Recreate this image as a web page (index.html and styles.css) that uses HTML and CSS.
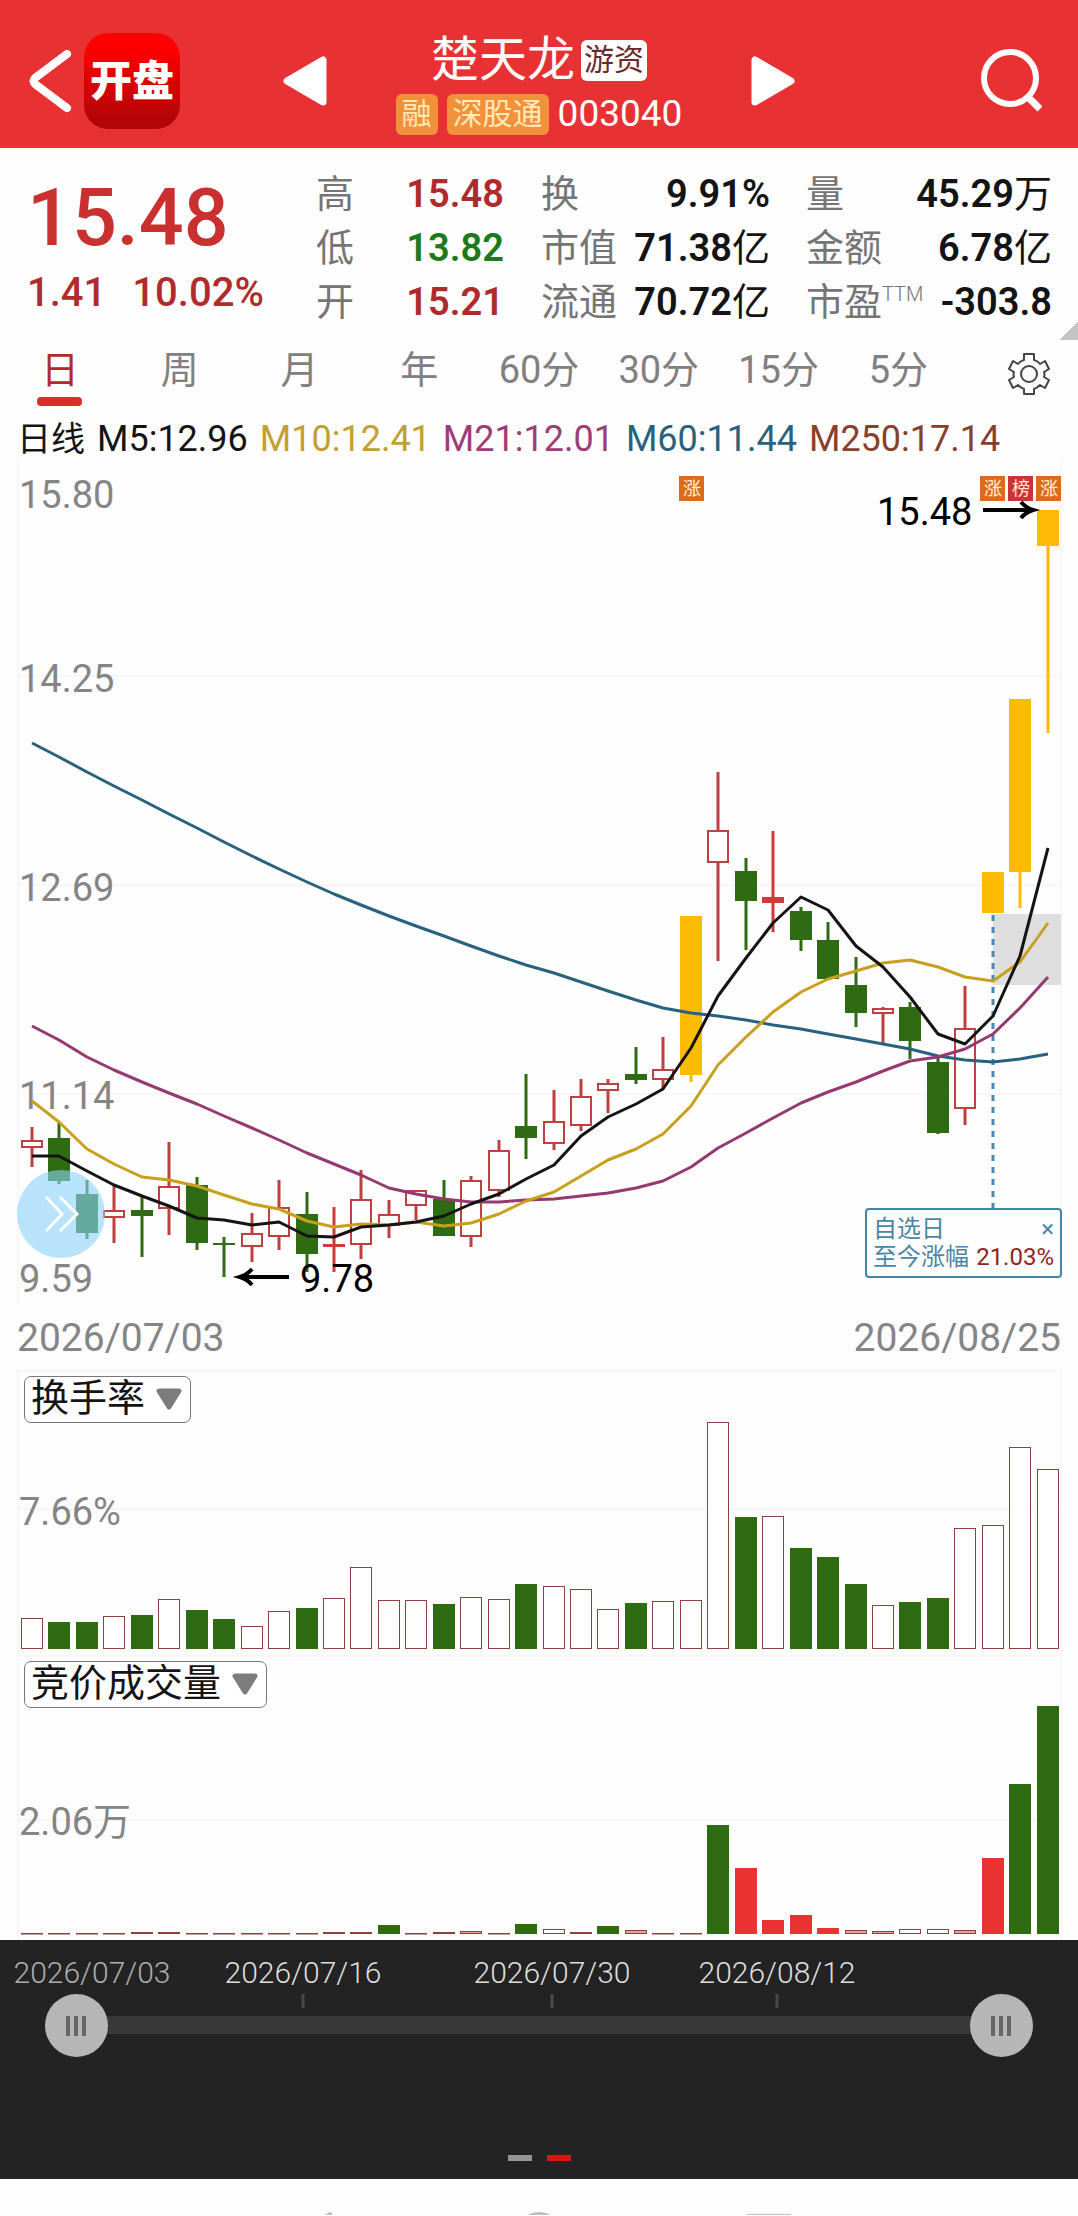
FILE: index.html
```html
<!DOCTYPE html>
<html lang="zh-CN">
<head>
<meta charset="utf-8">
<title>楚天龙 003040</title>
<meta content="width=device-width, initial-scale=1" name="viewport" />
<link rel="stylesheet" href="styles.css">
</head>

<body>
<header class="header">
  <div class="hdr-left">
    <button class="icon-btn" aria-label="返回">
      <svg width="44" height="64" viewBox="0 0 44 64"><path d="M39 5 L7 29 Q4 32 7 35 L39 59" fill="none" stroke="#fff" stroke-width="8" stroke-linecap="round" stroke-linejoin="round"/></svg>
    </button>
    <div class="logo">开盘</div>
  </div>
  <div class="hdr-mid">
    <button class="icon-btn" aria-label="上一只">
      <svg width="44" height="50" viewBox="0 0 44 50"><path d="M4 25 L40 4 V46 Z" fill="#fff" stroke="#fff" stroke-width="7" stroke-linejoin="round"/></svg>
    </button>
    <div class="stock">
      <div class="stock-row">
        <h1 class="name">楚天龙</h1>
        <span class="tag tag-white">游资</span>
      </div>
      <div class="stock-row stock-sub">
        <span class="tag">融</span>
        <span class="tag">深股通</span>
        <span class="code">003040</span>
      </div>
    </div>
    <button class="icon-btn" aria-label="下一只">
      <svg width="44" height="50" viewBox="0 0 44 50"><path d="M40 25 L4 4 V46 Z" fill="#fff" stroke="#fff" stroke-width="7" stroke-linejoin="round"/></svg>
    </button>
  </div>
  <div class="hdr-right">
    <button class="icon-btn" aria-label="搜索">
      <svg width="64" height="64" viewBox="0 0 64 64" fill="none" stroke="#fff" stroke-width="6"><circle cx="32" cy="29" r="26"/><path d="M50 48 L62 60" stroke-width="7"/></svg>
    </button>
  </div>
</header>

<section class="quote">
  <div class="price-box">
    <div class="price">15.48</div>
    <div class="change"><span>1.41</span><span>10.02%</span></div>
  </div>
  <dl class="stats stats-a">
    <div><dt>高</dt><dd class="up">15.48</dd></div>
    <div><dt>低</dt><dd class="down">13.82</dd></div>
    <div><dt>开</dt><dd class="up">15.21</dd></div>
  </dl>
  <dl class="stats stats-b">
    <div><dt>换</dt><dd>9.91%</dd></div>
    <div><dt>市值</dt><dd>71.38<i>亿</i></dd></div>
    <div><dt>流通</dt><dd>70.72<i>亿</i></dd></div>
  </dl>
  <dl class="stats stats-c">
    <div><dt>量</dt><dd>45.29<i>万</i></dd></div>
    <div><dt>金额</dt><dd>6.78<i>亿</i></dd></div>
    <div><dt>市盈<small>TTM</small></dt><dd>-303.8</dd></div>
  </dl>
  <span class="corner"></span>
</section>

<nav class="tabs">
  <button class="tab active">日</button>
  <button class="tab">周</button>
  <button class="tab">月</button>
  <button class="tab">年</button>
  <button class="tab">60分</button>
  <button class="tab">30分</button>
  <button class="tab">15分</button>
  <button class="tab">5分</button>
  <button class="tab tab-set" aria-label="设置">
    <svg width="44" height="44" viewBox="0 0 44 44" fill="none" stroke="#444" stroke-width="2" stroke-linejoin="round">
      <path d="M17 2 H27 V8 Q31 9 33 12 L38 9 L42 17 L37 20 Q38 22 37 25 L42 28 L38 36 L33 33 Q30 36 27 37 V42 H17 V37 Q14 36 11 33 L6 36 L2 28 L7 25 Q6 22 7 20 L2 17 L6 9 L11 12 Q13 9 17 8 Z"/>
      <circle cx="22" cy="22" r="8"/>
    </svg>
  </button>
</nav>

<div class="legend">
  <span class="legend-name">日线</span>
  <span>M5:12.96</span>
  <span class="m10">M10:12.41</span>
  <span class="m21">M21:12.01</span>
  <span class="m60">M60:11.44</span>
  <span class="m250">M250:17.14</span>
</div>

<div class="chart">
  <svg id="kline" viewBox="0 0 1078 850">
    <path class="frame" d="M18 0 V845 M1061 0 V820 M18 216 H1061 M18 425 H1061 M18 634 H1061"/>
    <rect x="993" y="454" width="68" height="71" fill="#dedede"/>
    <g id="candles"></g>
    <g class="axis">
      <text x="19" y="48">15.80</text>
      <text x="19" y="232">14.25</text>
      <text x="19" y="441">12.69</text>
      <text x="19" y="649">11.14</text>
      <text x="19" y="832">9.59</text>
    </g>
    <path class="dash" d="M993 455 V748"/>
    <g id="lines"></g>
    <g class="mark">
      <rect x="679" y="16" width="25" height="25"/><text x="692" y="35">涨</text>
      <rect x="980" y="16" width="25" height="25"/><text x="993" y="35">涨</text>
      <rect x="1008" y="16" width="25" height="25" class="mark-red"/><text x="1021" y="35">榜</text>
      <rect x="1036" y="16" width="25" height="25"/><text x="1049" y="35">涨</text>
    </g>
    <g class="peak">
      <text x="877" y="65">15.48</text>
      <path d="M983 50 H1030 M1021 42 Q1026 48 1033 50 Q1026 52 1021 58"/>
      <text x="300" y="832">9.78</text>
      <path d="M289 817 H243 M252 809 Q247 815 240 817 Q247 819 252 825"/>
    </g>
  </svg>
  <button class="expand" aria-label="展开">
    <svg width="40" height="40" viewBox="0 0 40 40" fill="none" stroke="#fff" stroke-width="3"><path d="M5 3 L21 20 L5 37 M19 3 L36 20 L19 37"/></svg>
  </button>
  <div class="tip">
    <div class="tip-row"><span>自选日</span><button class="tip-close" aria-label="关闭">×</button></div>
    <div class="tip-row"><span>至今涨幅</span><b>21.03%</b></div>
  </div>
</div>

<div class="dates">
  <span>2026/07/03</span>
  <span>2026/08/25</span>
</div>

<div class="chart">
  <svg viewBox="0 0 1078 285">
    <path class="frame" d="M18 1 H1061 M18 0 V285 M1061 0 V285 M18 139 H1061"/>
    <g class="axis"><text x="19" y="155">7.66%</text></g>
    <g id="turnover"></g>
  </svg>
  <div class="pick">
    <select aria-label="指标一"><option>换手率</option></select>
    <svg width="26" height="22" viewBox="0 0 26 22"><path d="M3 3 H23 L13 19 Z" fill="#7c7c7c" stroke="#7c7c7c" stroke-width="5" stroke-linejoin="round"/></svg>
  </div>
</div>

<div class="chart">
  <svg viewBox="0 0 1078 285">
    <path class="frame" d="M18 1 H1061 M18 0 V285 M1061 0 V285 M18 165 H1061"/>
    <g class="axis"><text x="19" y="180">2.06万</text></g>
    <g id="auction"></g>
  </svg>
  <div class="pick">
    <select aria-label="指标二"><option>竞价成交量</option></select>
    <svg width="26" height="22" viewBox="0 0 26 22"><path d="M3 3 H23 L13 19 Z" fill="#7c7c7c" stroke="#7c7c7c" stroke-width="5" stroke-linejoin="round"/></svg>
  </div>
</div>

<section class="range">
  <svg class="range-axis" viewBox="0 0 1078 54">
    <g class="range-text">
      <text x="92" y="43" class="dim">2026/07/03</text>
      <text x="303" y="43">2026/07/16</text>
      <text x="552" y="43">2026/07/30</text>
      <text x="777" y="43">2026/08/12</text>
    </g>
  </svg>
  <svg class="range-axis" viewBox="0 0 1078 14"><path d="M303 0 V14 M552 0 V14 M777 0 V14" stroke="#484848" stroke-width="3"/></svg>
  <div class="slider">
    <div class="slider-track"></div>
    <input type="range" min="0" max="100" value="0" aria-label="开始日期">
    <input type="range" min="0" max="100" value="100" aria-label="结束日期">
  </div>
  <div class="pager"><span></span><span class="on"></span></div>
</section>

<nav class="sysbar">
  <svg viewBox="0 0 1078 36" fill="none" stroke="#bdbdbd" stroke-width="4">
    <path d="M330 35 L304 54 L330 73 Z" stroke-linejoin="round"/>
    <circle cx="539" cy="56" r="21"/>
    <rect x="749" y="37" width="40" height="40"/>
  </svg>
</nav>

<script src="script.js"></script>
</body>
</html>
```
FILE: styles.css
```css
* {
  box-sizing: border-box;
  margin: 0;
  padding: 0;
}
body {
  background: #fdfdfd;
  color: #141414;
  font-family: Roboto, "Noto Sans CJK SC", sans-serif;
  font-size: 38px;
}
button {
  border: none;
  background: none;
  font: inherit;
  color: inherit;
  cursor: pointer;
}
svg {
  display: block;
}

/* header */
.header {
  display: flex;
  align-items: center;
  height: 148px;
  padding: 14px 28px 0;
  background: #e83133;
  color: #fff;
}
.hdr-left, .hdr-right {
  display: flex;
  flex: 1;
  align-items: center;
}
.hdr-left {
  gap: 12px;
}
.hdr-right {
  justify-content: flex-end;
}
.hdr-right .icon-btn {
  padding-right: 8px;
}
.logo {
  width: 96px;
  height: 96px;
  border-radius: 24px;
  background: linear-gradient(#ff0000 15%, #b40508 90%);
  font-size: 42px;
  font-weight: 900;
  line-height: 98px;
  text-align: center;
}
.hdr-mid {
  display: flex;
  width: 512px;
  align-items: center;
  justify-content: space-between;
}
.stock {
  display: flex;
  flex-direction: column;
  align-items: center;
  gap: 4px;
  padding-top: 6px;
}
.stock-row {
  display: flex;
  align-items: center;
  gap: 6px;
}
.stock-sub {
  gap: 9px;
}
.name {
  font-size: 48px;
  font-weight: 400;
  line-height: 56px;
}
.tag {
  height: 41px;
  padding: 0 6px;
  border-radius: 6px;
  background: #f3903c;
  color: #ffeab8;
  font-size: 30px;
  line-height: 40px;
}
.tag-white {
  padding: 0 3px;
  background: #fff;
  color: #6b2a2a;
}
.code {
  font-size: 37px;
  line-height: 44px;
}

/* quote */
.quote {
  position: relative;
  display: flex;
  padding: 19px 26px 11px 27px;
}
.price-box {
  flex: 1;
  color: #c9302f;
  font-weight: 500;
}
.price {
  font-size: 79px;
  line-height: 102px;
}
.change {
  display: flex;
  gap: 26px;
  color: #b02c2c;
  font-size: 40px;
  line-height: 48px;
}
.stats > div {
  display: flex;
  justify-content: space-between;
  line-height: 54px;
}
.stats dt {
  color: #757575;
}
.stats dd {
  font-weight: 600;
}
.stats i {
  font-style: normal;
  font-weight: 400;
}
.stats small {
  font-size: 20px;
  font-weight: 300;
  vertical-align: 14px;
  line-height: 20px;
}
.stats-a {
  width: 188px;
  margin-right: 37px;
}
.stats-b {
  width: 229px;
  margin-right: 36px;
}
.stats-c {
  width: 246px;
}
.stats .up {
  color: #ad2b2c;
}
.stats .down {
  color: #1c7a1c;
}
.corner {
  position: absolute;
  right: 0;
  bottom: 0;
  width: 19px;
  height: 19px;
  background: linear-gradient(135deg, transparent 50%, #c4c4c4 50%);
}

/* period tabs */
.tabs {
  display: grid;
  grid-template-columns: repeat(9, 1fr);
}
.tab {
  display: flex;
  flex-direction: column;
  align-items: center;
  height: 70px;
  padding-top: 3px;
  color: #808080;
  line-height: 54px;
}
.tab.active {
  color: #b02a2a;
}
.tab.active::after {
  content: "";
  width: 45px;
  height: 9px;
  border-radius: 4px;
  background: #dc2d2d;
}
.tab-set {
  padding: 12px 0 0 22px;
}
.legend {
  display: flex;
  gap: 12px;
  padding: 3px 17px 0;
  font-size: 36px;
  line-height: 52px;
  white-space: nowrap;
}
.legend-name {
  font-size: 34px;
}
.m10 { color: #c2a032; }
.m21 { color: #9d3d77; }
.m60 { color: #28627f; }
.m250 { color: #8a3f2c; }

/* charts */
.chart {
  position: relative;
}
.legend + .chart {
  margin-top: -5px;
}
.chart > svg {
  width: 100%;
  height: auto;
}
.frame {
  fill: none;
  stroke: #f0f0f2;
  stroke-width: 1;
}
.axis text {
  fill: #858585;
}
.dash {
  stroke: #4a88b4;
  stroke-width: 3;
  stroke-dasharray: 6 6;
}
.ma {
  fill: none;
  stroke-width: 3;
  stroke-linejoin: round;
}
.mark rect {
  fill: #dc6b1e;
}
.mark .mark-red {
  fill: #cd3238;
}
.mark text {
  fill: #fff0d0;
  font-size: 18px;
  text-anchor: middle;
}
.peak text {
  fill: #000;
}
.peak path {
  fill: none;
  stroke: #000;
  stroke-width: 4;
}
.expand {
  position: absolute;
  left: 17px;
  bottom: 52px;
  display: flex;
  align-items: center;
  justify-content: center;
  width: 88px;
  height: 88px;
  border-radius: 50%;
  background: rgba(140, 210, 250, 0.6);
}
.tip {
  position: absolute;
  right: 16px;
  bottom: 32px;
  width: 197px;
  height: 70px;
  padding: 5px 6px;
  border: 2px solid #3d86a8;
  border-radius: 4px;
  background: #fdfdfd;
  color: #4a86a5;
  font-size: 24px;
  line-height: 28px;
  white-space: nowrap;
}
.tip-row {
  display: flex;
  justify-content: space-between;
}
.tip-row b {
  color: #8f2626;
  font-weight: 400;
}
.dates {
  display: flex;
  justify-content: space-between;
  padding: 0 17px 4px;
  color: #858585;
  font-size: 39px;
  line-height: 56px;
}
.pick {
  position: absolute;
  left: 24px;
  top: 6px;
}
.pick select {
  display: block;
  height: 47px;
  padding: 0 44px 4px 6px;
  border: 1px solid #777;
  border-radius: 7px;
  background: #fff;
  color: #141414;
  font: inherit;
  line-height: 42px;
  appearance: none;
}
.pick svg {
  position: absolute;
  right: 9px;
  top: 12px;
  pointer-events: none;
}
.bar-up {
  fill: #fff;
  stroke: #8c4040;
  stroke-width: 1;
}
.bar-pale {
  fill: #e8a09a;
  stroke: #8c4040;
  stroke-width: 1;
}
.bar-red { fill: #e93232; }
.bar-down { fill: #2f6b13; }

/* date range slider */
.range {
  height: 239px;
  background: #232323;
}
.range-axis {
  width: 100%;
  height: auto;
}
.range-text text {
  fill: #dedede;
  font-size: 30px;
  font-weight: 300;
  text-anchor: middle;
}
.range-text .dim {
  fill: #adadad;
}
.slider {
  display: grid;
  align-items: center;
  height: 64px;
  margin: -15px 45px 0;
}
.slider > * {
  grid-area: 1 / 1;
}
.slider-track {
  height: 18px;
  margin: 0 32px;
  background: #3a3939;
}
.slider input {
  width: 100%;
  height: 64px;
  background: none;
  appearance: none;
  pointer-events: none;
}
.slider input::-webkit-slider-thumb {
  width: 63px;
  height: 63px;
  border-radius: 50%;
  background:
    linear-gradient(#666, #666) 21px 22px / 4px 20px no-repeat,
    linear-gradient(#666, #666) 29px 22px / 4px 20px no-repeat,
    linear-gradient(#666, #666) 37px 22px / 4px 20px no-repeat,
    #b6b6b6;
  appearance: none;
  pointer-events: auto;
}
.pager {
  display: flex;
  justify-content: center;
  gap: 15px;
  padding-top: 98px;
}
.pager span {
  width: 24px;
  height: 6px;
  background: #959595;
}
.pager .on {
  background: #dd1512;
}
.sysbar {
  overflow: hidden;
}
.sysbar svg {
  width: 100%;
  height: auto;
}
```
FILE: script.js
```js
// one slot per trading day
const FIRST = 32;
const STEP = 27.45;
const BAR = 22;
const BASE = 279;

// type, high, body top, body bottom, low
const candles = [
  ['up', 667, 680, 688, 707], ['down', 663, 678, 721, 724], ['down', 720, 734, 773, 779],
  ['up', 725, 750, 758, 783], ['down', 736, 750, 756, 797], ['up', 682, 726, 749, 775],
  ['down', 717, 725, 783, 790], ['down', 777, 783, 785, 817], ['up', 753, 773, 787, 802],
  ['up', 720, 747, 777, 790], ['down', 732, 754, 794, 812], ['flat', 747, 784, 787, 812],
  ['up', 710, 739, 785, 799], ['up', 740, 754, 766, 778], ['up', 730, 730, 746, 760],
  ['down', 720, 739, 776, 776], ['up', 716, 720, 777, 787], ['up', 680, 690, 731, 737],
  ['down', 614, 666, 678, 699], ['up', 630, 661, 684, 690], ['up', 619, 636, 666, 671],
  ['up', 619, 623, 631, 653], ['down', 587, 614, 620, 624], ['up', 577, 609, 620, 629],
  ['limit', 456, 456, 615, 622], ['up', 312, 370, 403, 501], ['down', 398, 411, 441, 490],
  ['flat', 371, 437, 443, 472], ['down', 447, 451, 480, 491], ['down', 462, 480, 519, 519],
  ['down', 497, 525, 553, 567], ['up', 547, 548, 554, 583], ['down', 542, 547, 581, 599],
  ['down', 597, 602, 673, 674], ['up', 526, 568, 649, 665], ['limit', 412, 412, 453, 453],
  ['limit', 239, 239, 412, 448], ['limit', 50, 50, 86, 273]
];
const colors = { up: '#bf4040', flat: '#cf3a3a', down: '#2f6b13', limit: '#fdbb05' };

const averages = {
  '#28627f': [283, 297, 312, 326, 340, 354, 368, 382, 396, 409, 422, 434, 445, 456, 466, 476, 486, 496, 505, 513, 522, 531, 540, 548, 553, 556, 560, 565, 569, 574, 579, 584, 589, 596, 600, 602, 599, 594],
  '#943a70': [566, 580, 597, 610, 622, 633, 644, 656, 668, 680, 693, 704, 715, 728, 734, 739, 742, 742, 740, 739, 736, 733, 728, 721, 707, 688, 673, 658, 643, 632, 622, 611, 601, 597, 589, 574, 548, 517],
  '#c8a01e': [641, 662, 689, 704, 717, 720, 726, 735, 744, 749, 761, 767, 764, 765, 762, 766, 763, 754, 741, 732, 716, 700, 689, 674, 646, 605, 577, 552, 532, 519, 511, 503, 500, 507, 517, 521, 502, 463],
  '#141414': [696, 696, 711, 725, 736, 746, 758, 760, 765, 762, 776, 777, 767, 765, 762, 756, 744, 734, 719, 705, 676, 657, 644, 629, 588, 536, 498, 463, 437, 450, 486, 507, 537, 574, 584, 556, 496, 388]
};

// negative = down day
const turnover = [31, -27, -27, 33, -34, 50, -39, -30, 23, 38, -41, 51, 82, 49, 49, -45, 52, 50, -65,
  63, 60, 40, -46, 48, 49, 227, -132, 133, -101, -92, -65, 44, -47, -51, 121, 124, 202, 180];

const auction = [
  ['pale', 1], ['pale', 1], ['pale', 1], ['pale', 1], ['pale', 2], ['pale', 2], ['pale', 1], ['pale', 1],
  ['pale', 1], ['pale', 1], ['pale', 1], ['pale', 2], ['pale', 2], ['down', 9], ['pale', 1], ['pale', 2],
  ['pale', 3], ['pale', 1], ['down', 10], ['up', 5], ['pale', 2], ['down', 8], ['pale', 4], ['pale', 1],
  ['pale', 1], ['down', 109], ['red', 66], ['red', 14], ['red', 19], ['red', 6], ['pale', 4], ['pale', 3],
  ['up', 5], ['up', 5], ['pale', 4], ['red', 76], ['down', 150], ['down', 228]
];

const xAt = i => Math.round(FIRST + i * STEP);

function add(parent, tag, attrs) {
  const el = document.createElementNS('http://www.w3.org/2000/svg', tag);
  for (const key in attrs) el.setAttribute(key, attrs[key]);
  parent.appendChild(el);
}

function drawBar(parent, i, type, height) {
  const x = xAt(i) - BAR / 2;
  // outlined bars sit on half pixels so the border stays sharp
  if (type === 'up' || type === 'pale') {
    add(parent, 'rect', { class: 'bar-' + type, x: x + 0.5, y: BASE - height + 0.5, width: BAR - 1, height: Math.max(height - 1, 0.5) });
  } else {
    add(parent, 'rect', { class: 'bar-' + type, x: x, y: BASE - height, width: BAR, height: height });
  }
}

const candleBox = document.getElementById('candles');
candles.forEach(([type, high, top, bottom, low], i) => {
  const x = xAt(i);
  const color = colors[type];
  add(candleBox, 'path', { d: `M${x} ${high} V${top} M${x} ${bottom} V${low}`, stroke: color, 'stroke-width': 3 });
  if (type === 'up') {
    add(candleBox, 'rect', { x: x - 10, y: top + 1, width: BAR - 2, height: bottom - top - 2, fill: '#fff', stroke: color, 'stroke-width': 2 });
  } else {
    add(candleBox, 'rect', { x: x - 11, y: top, width: BAR, height: bottom - top, fill: color });
  }
});

const lineBox = document.getElementById('lines');
for (const color in averages) {
  add(lineBox, 'polyline', { class: 'ma', stroke: color, points: averages[color].map((y, i) => xAt(i) + ',' + y).join(' ') });
}

const turnoverBox = document.getElementById('turnover');
turnover.forEach((v, i) => drawBar(turnoverBox, i, v < 0 ? 'down' : 'up', Math.abs(v)));

const auctionBox = document.getElementById('auction');
auction.forEach(([type, v], i) => drawBar(auctionBox, i, type, v));
```
